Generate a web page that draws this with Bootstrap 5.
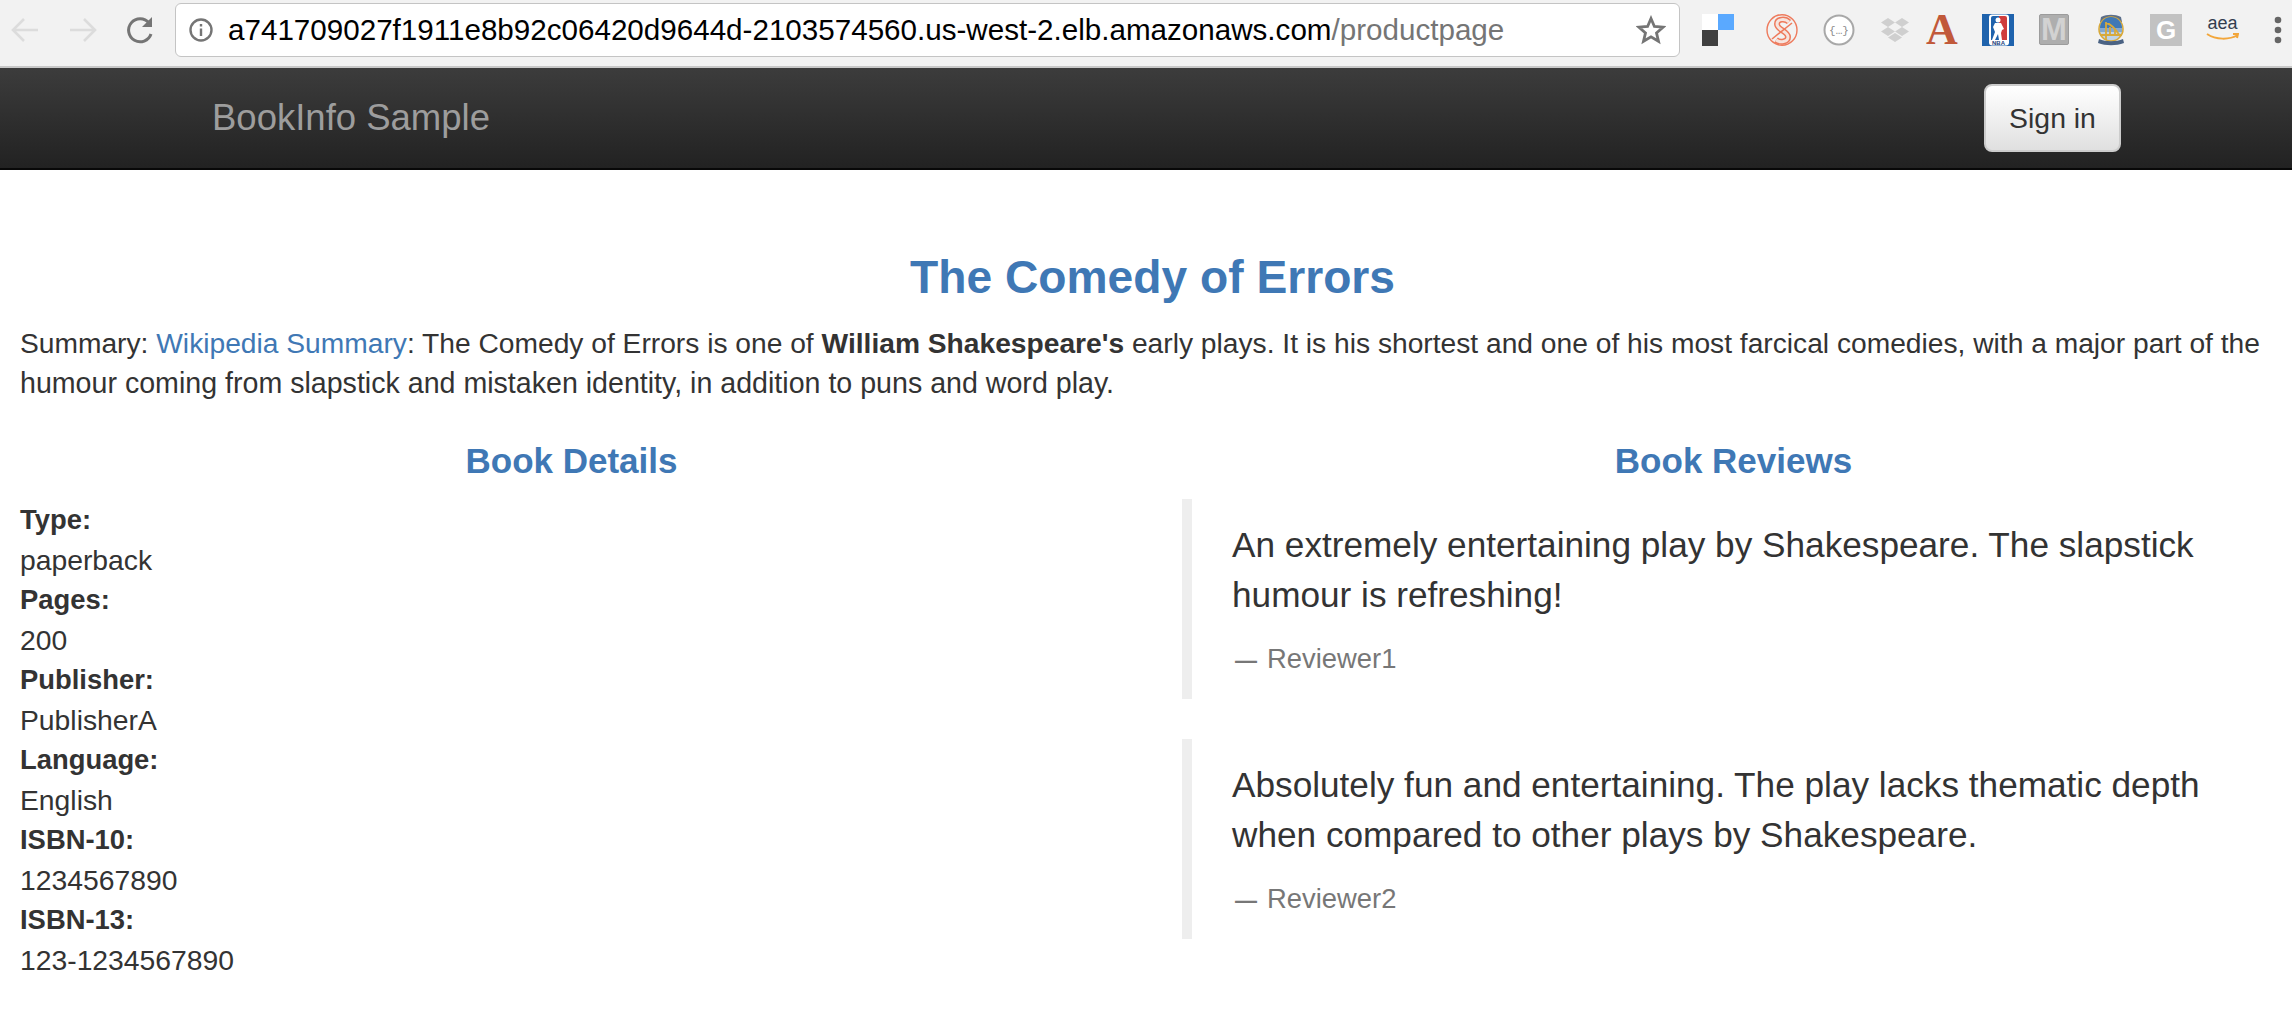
<!DOCTYPE html>
<html lang="en">
<head>
    <meta charset="UTF-8">
    <title>Simple Bookstore App</title>
    <link href="https://cdn.jsdelivr.net/npm/bootstrap@5.3.3/dist/css/bootstrap.min.css" rel="stylesheet">
    <style>
        body { font-family: "Liberation Sans", Arial, sans-serif; font-size: 28.3px; line-height: 40px; color: #333; background: #fff; }
        a { color: #3f78b5; text-decoration: none; }

        /* browser chrome */
        .chrome-bar { height: 68px; padding: 3px 0 9px 10px; background: #f2f2f2; border-bottom: 2px solid #c8c8c8; }
        .chrome-btn { width: 30px; height: 30px; flex: none; }
        .nav-gap { margin-right: 28px; }
        .reload-gap { margin-right: 19px; }
        .url-box { width: 1505px; height: 54px; flex: none; padding: 0 13px; background: #fff; border: 1px solid #c4c4c4; border-radius: 6px; }
        .url-text { margin-left: 15px; font-size: 29.6px; line-height: 54px; color: #000; white-space: nowrap; }
        .url-text span { color: #757575; }
        .ext-row { display: grid; grid-template-columns: 64px 57px 57px 46px 56px 57px 58px 53px 56px 67px 10px; height: 32px; margin-left: 22px; }
        .ext-row svg { display: block; }
        .ext-g { width: 32px; height: 32px; background: #c2c2c2; color: #fff; font-weight: 700; font-size: 26px; line-height: 32px; text-align: center; }
        .ext-aea { width: 33px; color: #333e50; font-size: 18px; line-height: 19px; text-align: center; }
        .ext-letter { width: 32px; font-family: "Liberation Serif", serif; font-weight: 700; font-size: 44px; line-height: 32px; color: #c1593a; text-align: center; }
        .ext-m { width: 30px; height: 31px; background: #aeaeae; border: 1px solid #9c9c9c; border-radius: 2px; color: #d2d2d2; font-weight: 700; font-size: 31px; line-height: 29px; text-align: center; }

        /* page navbar */
        .top-bar { height: 102px; padding: 0; background: linear-gradient(to bottom, #3c3c3c, #222); border-bottom: 2px solid #080808; }
        .top-bar .navbar-brand { margin: 0 0 0 212px; padding: 0; font-size: 36.5px; line-height: 50px; color: #9d9d9d; }
        .signin { margin-right: 171px; width: 137px; height: 68px; padding: 0; font-size: 28.4px; color: #333; background: linear-gradient(to bottom, #fff, #e0e0e0); border: 2px solid #ccc; border-radius: 8px; }

        /* content */
        .book-title { margin: 80px 0 18px; padding-left: 13px; font-size: 46.2px; line-height: 55px; font-weight: 700; color: #3f78b5; }
        .summary { margin: 0 0 38px; padding: 0 20px; font-size: 28.2px; }
        .summary-tail { font-size: 28.6px; }
        .book-head { margin: 0 0 18px; font-size: 35px; line-height: 40px; font-weight: 700; color: #3f78b5; }
        .col-left { flex: 0 0 1146px; width: 1146px; padding: 0 23px 0 20px; }
        .col-right { flex: 0 0 1146px; width: 1146px; padding: 0 7px 0 36px; }
        .details { padding-top: 1px; }
        .details dt { font-weight: 700; font-size: 27.4px; }
        .details dd { margin: 0; }
        .review { margin: 0 0 40px; padding: 21px 40px 20px; font-size: 35.2px; line-height: 50px; border-left: 10px solid #eee; }
        .review p { margin: 0 0 19px; }
        .review .blockquote-footer { margin: 0; font-size: 27.4px; line-height: 40px; color: #777; }
        .review .blockquote-footer::before { content: "\2014"; margin: 0 10px 0 3px; font-size: 22px; font-weight: 700; line-height: 0; }
    </style>
</head>
<body>
<!-- Browser toolbar -->
<div class="chrome-bar d-flex align-items-center">
    <svg class="chrome-btn nav-gap" viewBox="0 0 30 30" fill="none" stroke="#dcdcdc" stroke-width="2.6"><path d="M28 15H3M14 4 3 15l11 11"/></svg>
    <svg class="chrome-btn nav-gap" viewBox="0 0 30 30" fill="none" stroke="#dcdcdc" stroke-width="2.6"><path d="M2 15h25M16 4l11 11-11 11"/></svg>
    <svg class="chrome-btn reload-gap" viewBox="0 0 30 30" fill="none" stroke="#757575" stroke-width="3"><path d="M25 19a11.500 11.500 0 1 1-2-11"/><path d="M26 2v10H16z" fill="#757575" stroke="none"/></svg>
    <div class="url-box d-flex align-items-center">
        <svg width="24" height="24" viewBox="0 0 24 24"><circle cx="12" cy="12" r="10.500" fill="none" stroke="#757575" stroke-width="2.4"/><path d="M10.800 10.500h2.400V18h-2.400zM10.800 6h2.400v2.400h-2.400z" fill="#757575"/></svg>
        <div class="url-text flex-grow-1">a741709027f1911e8b92c06420d9644d-2103574560.us-west-2.elb.amazonaws.com<span>/productpage</span></div>
        <svg width="30" height="30" viewBox="0 0 30 30"><path d="M15 3.500l3.400 8 8.600.7-6.500 5.700 2 8.400-7.500-4.500-7.500 4.500 2-8.400-6.500-5.700 8.600-.7z" fill="none" stroke="#757575" stroke-width="2.800"/></svg>
    </div>
    <div class="ext-row">
        <svg width="32" height="32" viewBox="0 0 32 32"><rect width="16" height="16" fill="#fff"/><rect x="16" width="16" height="16" fill="#5aa9ff"/><rect y="16" width="16" height="16" fill="#404040"/></svg>
        <svg width="32" height="32" viewBox="0 0 32 32" fill="none"><ellipse cx="16" cy="16" rx="15" ry="15.300" stroke="#ee7a5c" stroke-width="1.400"/><path d="M23 8C19 4 11 5 11 10c0 6 11 7 11 13 0 5-8 6-12 3" stroke="#ee7a5c" stroke-width="6"/><path d="M23 8C19 4 11 5 11 10c0 6 11 7 11 13 0 5-8 6-12 3" stroke="#f6e4de" stroke-width="3"/><path d="M26 9 6 25" stroke="#ee7a5c" stroke-width="1.600"/></svg>
        <svg width="32" height="32" viewBox="0 0 32 32"><circle cx="16" cy="16" r="14.500" fill="#fff" stroke="#a8a8a8" stroke-width="2"/><text x="16" y="20" font-family="Liberation Mono, monospace" font-size="11" fill="#8a8a8a" text-anchor="middle">{…}</text></svg>
        <svg width="30" height="32" viewBox="0 0 30 32" fill="#cfcfcf"><path d="M8 4l7 4.500-7 4.500-7-4.500zM22 4l7 4.500-7 4.500-7-4.500zM8 13l7 4.500-7 4.500-7-4.500zM22 13l7 4.500-7 4.500-7-4.500zM15 19l7 4.500-7 4.500-7-4.500z"/></svg>
        <div class="ext-letter">A</div>
        <svg width="32" height="32" viewBox="0 0 32 32"><rect width="32" height="32" fill="#1f63ad"/><rect x="7" y="0.500" width="20" height="31" rx="3" fill="#fff"/><path d="M9 4a2 2 0 0 1 2-2h6v24H9z" fill="#1f63ad"/><path d="M17 2h6a2 2 0 0 1 2 2v22h-8z" fill="#cf3c3c"/><circle cx="16" cy="6" r="2.500" fill="#fff"/><path d="M13 9h6l3 6-2 1-1 3 1 7h-3l-1-6-3 6h-3l3-8-2-5z" fill="#fff"/><text x="16.500" y="30.500" font-size="6" font-weight="700" fill="#1f3f7a" text-anchor="middle">NBA</text></svg>
        <div class="ext-m">M</div>
        <svg width="28" height="32" viewBox="0 0 28 32"><path d="M4 3c6-3 14-3 20 0l1 5H3z" fill="#5c6f8a"/><circle cx="14" cy="15" r="12" fill="#c0d3e6" stroke="#d8a93a" stroke-width="1.600"/><path d="M3 14a11 11 0 0 1 22 0z" fill="#3f78b5"/><path d="M3 14h22v4H3z" fill="#86a9cf"/><path d="M9 26V8M9 9c5 1 9 5 14 13M3 21h22M13 13v8M18 16v5" fill="none" stroke="#d8a93a" stroke-width="1.800"/><path d="M2 25c7 3 17 3 24 0l1 4c-8 3-18 3-26 0z" fill="#4a6283"/></svg>
        <div class="ext-g">G</div>
        <div class="ext-aea">aea<svg width="33" height="8" viewBox="0 0 33 8" fill="none" stroke="#f2a63b" stroke-width="2"><path d="M1 1c9 6 22 6 31 1M27 1l5 0-1 4"/></svg></div>
        <svg width="10" height="32" viewBox="0 0 10 32" fill="#666"><circle cx="5" cy="6" r="3.300"/><circle cx="5" cy="16" r="3.300"/><circle cx="5" cy="26" r="3.300"/></svg>
    </div>
</div>

<!-- Navigation -->
<nav class="navbar top-bar">
    <a class="navbar-brand" href="#">BookInfo Sample</a>
    <button class="btn signin" type="button">Sign in</button>
</nav>

<h3 class="book-title text-center">The Comedy of Errors</h3>
<p class="summary">Summary: <a href="#">Wikipedia Summary</a>: The Comedy of Errors is one of <b>William Shakespeare's</b> early plays. It is his shortest and one of his most farcical comedies, with a major part of the <span class="summary-tail">humour coming from slapstick and mistaken identity, in addition to puns and word play.</span></p>

<div class="d-flex">
    <div class="col-left">
        <h4 class="book-head text-center">Book Details</h4>
        <dl class="details mb-0">
            <dt>Type:</dt><dd>paperback</dd>
            <dt>Pages:</dt><dd>200</dd>
            <dt>Publisher:</dt><dd>PublisherA</dd>
            <dt>Language:</dt><dd>English</dd>
            <dt>ISBN-10:</dt><dd>1234567890</dd>
            <dt>ISBN-13:</dt><dd>123-1234567890</dd>
        </dl>
    </div>
    <div class="col-right">
        <h4 class="book-head text-center">Book Reviews</h4>
        <blockquote class="review">
            <p>An extremely entertaining play by Shakespeare. The slapstick humour is refreshing!</p>
            <div class="blockquote-footer">Reviewer1</div>
        </blockquote>
        <blockquote class="review">
            <p>Absolutely fun and entertaining. The play lacks thematic depth when compared to other plays by Shakespeare.</p>
            <div class="blockquote-footer">Reviewer2</div>
        </blockquote>
    </div>
</div>
</body>
</html>
